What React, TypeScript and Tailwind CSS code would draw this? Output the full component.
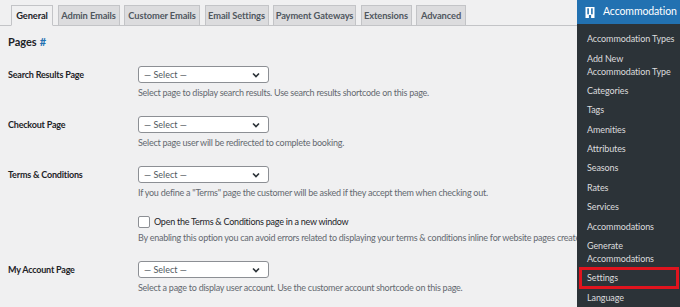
import React from "react";

const font = { fontFamily: 'Lato, "Noto Sans", sans-serif' };

function Select() {
  return (
    <div className="flex h-[17px] w-[131px] items-center justify-between rounded-[3px] border border-[#8c8f94] bg-white pl-[5px] pr-[8px]">
      <span className="text-[9px] leading-none text-[#50575e]">— Select —</span>
      <svg width="8" height="6" viewBox="0 0 8 6">
        <path d="M1 1.5 L4 4.5 L7 1.5" stroke="#2c3338" strokeWidth="1.6" fill="none" />
      </svg>
    </div>
  );
}

function Desc({ children }: { children: React.ReactNode }) {
  return (
    <div className="whitespace-nowrap text-[9px] leading-[13px] tracking-[-0.25px] text-[#646970]">{children}</div>
  );
}

function Label({ children }: { children: React.ReactNode }) {
  return (
    <div className="flex h-[17px] w-[130px] shrink-0 items-center whitespace-nowrap text-[9px] font-bold tracking-[-0.2px] text-[#1d2327]">
      {children}
    </div>
  );
}

const tabs = [
  { name: "General", w: "w-[42px]", active: true },
  { name: "Admin Emails", w: "w-[62px]" },
  { name: "Customer Emails", w: "w-[76px]" },
  { name: "Email Settings", w: "w-[64px]" },
  { name: "Payment Gateways", w: "w-[83px]" },
  { name: "Extensions", w: "w-[51px]" },
  { name: "Advanced", w: "w-[50px]" },
];

const menu: { label: string[]; active?: boolean }[] = [
  { label: ["Accommodation Types"] },
  { label: ["Add New", "Accommodation Type"] },
  { label: ["Categories"] },
  { label: ["Tags"] },
  { label: ["Amenities"] },
  { label: ["Attributes"] },
  { label: ["Seasons"] },
  { label: ["Rates"] },
  { label: ["Services"] },
  { label: ["Accommodations"] },
  { label: ["Generate", "Accommodations"] },
  { label: ["Settings"], active: true },
  { label: ["Language"] },
];

export default function App() {
  return (
    <div style={font} className="flex h-[307px] w-[680px] overflow-hidden bg-[#f0f0f1]">
      <div className="w-[577px] shrink-0 overflow-hidden">
        {/* tabs */}
        <div className="flex h-[26px] items-end gap-[4.5px] border-b border-[#c3c4c7] pl-[11px]">
          {tabs.map((t) => (
            <div
              key={t.name}
              className={
                "mb-[-1px] flex h-[21px] shrink-0 items-center justify-center whitespace-nowrap border border-[#c3c4c7] text-[9.3px] font-bold tracking-[-0.1px] " +
                t.w +
                " " +
                (t.active ? "border-b-[#f0f0f1] bg-[#f0f0f1] text-[#1d2327]" : "bg-[#dcdcde] text-[#50575e]")
              }
            >
              {t.name}
            </div>
          ))}
        </div>
        <div className="pl-[8px]">
          <div className="mt-[9px] flex h-[15px] items-center text-[11px] font-bold text-[#1d2327]">
            Pages <span className="ml-[3px] text-[#2271b1]">#</span>
          </div>

          <div className="mt-[16px] flex">
            <Label>Search Results Page</Label>
            <div>
              <Select />
              <div className="mt-[3px]">
                <Desc>Select page to display search results. Use search results shortcode on this page.</Desc>
              </div>
            </div>
          </div>

          <div className="mt-[17px] flex">
            <Label>Checkout Page</Label>
            <div>
              <Select />
              <div className="mt-[3px]">
                <Desc>Select page user will be redirected to complete booking.</Desc>
              </div>
            </div>
          </div>

          <div className="mt-[17px] flex">
            <Label>Terms &amp; Conditions</Label>
            <div>
              <Select />
              <div className="mt-[3px]">
                <Desc>If you define a "Terms" page the customer will be asked if they accept them when checking out.</Desc>
              </div>
              <div className="mt-[16px] flex h-[13px] items-center gap-[4px]">
                <div className="h-[12px] w-[12px] rounded-[2px] border border-[#8c8f94] bg-white" />
                <span className="text-[9px] tracking-[-0.25px] text-[#1d2327]">
                  Open the Terms &amp; Conditions page in a new window
                </span>
              </div>
              <div className="mt-[3px]">
                <Desc>
                  By enabling this option you can avoid errors related to displaying your terms &amp; conditions inline for website pages created
                </Desc>
              </div>
            </div>
          </div>

          <div className="mt-[17px] flex">
            <Label>My Account Page</Label>
            <div>
              <Select />
              <div className="mt-[3px]">
                <Desc>Select a page to display user account. Use the customer account shortcode on this page.</Desc>
              </div>
            </div>
          </div>
        </div>
      </div>

      {/* sidebar */}
      <div className="flex-1 overflow-hidden bg-[#2c3338]">
        <div className="flex h-[24px] items-center gap-[8px] bg-[#2271b1] pl-[8px]">
          <svg width="10" height="11" viewBox="0 0 10 11">
            <rect x="0.5" y="0" width="9" height="11" fill="#fff" />
            <rect x="2.3" y="1.3" width="1.6" height="6" fill="#2271b1" />
            <rect x="6.1" y="1.3" width="1.6" height="6" fill="#2271b1" />
            <rect x="3.9" y="8" width="2.2" height="3" fill="#2271b1" />
          </svg>
          <span className="whitespace-nowrap text-[10.5px] tracking-[-0.1px] text-white">Accommodation</span>
        </div>
        <div className="pt-[5px]">
          {menu.map((m, i) => (
            <div
              key={i}
              className="relative py-[3.2px] pl-[10px] text-[9px] leading-[13px] tracking-[-0.1px] text-[#dcdcde]"
            >
              {m.label.map((l) => (
                <div key={l} className="whitespace-nowrap">
                  {l}
                </div>
              ))}
              {m.active && (
                <div className="absolute left-[2px] right-[1px] top-[-1px] bottom-[-1px] border-[3px] border-[#e0141e]" />
              )}
            </div>
          ))}
        </div>
      </div>
    </div>
  );
}
